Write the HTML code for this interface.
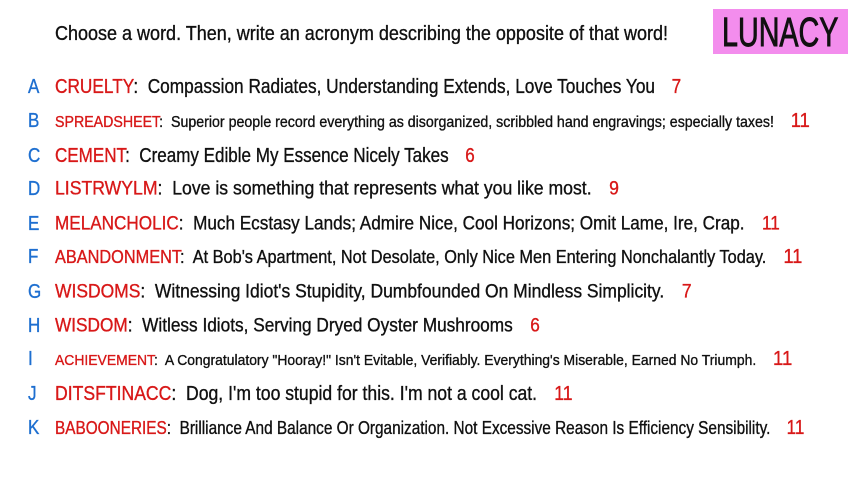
<!DOCTYPE html>
<html><head><meta charset="utf-8"><style>
html,body{margin:0;padding:0;background:#fff;width:853px;height:480px;overflow:hidden;font-family:"Liberation Sans",sans-serif;color:#111}
.l{position:absolute;left:0;white-space:nowrap;line-height:1;transform-origin:0 50%;-webkit-text-stroke:0.35px currentColor}
.k{position:absolute;left:28px;color:#1e6fd0;font-size:20px;transform:translateY(-50%) scaleX(0.85);transform-origin:0 50%;line-height:1;-webkit-text-stroke:0.35px currentColor}
.w{color:#d81818}
.n{color:#d81818;margin-left:14px}
.hd{position:absolute;left:55px;top:34px;font-size:20px;transform:translateY(-50%) scaleX(0.9);transform-origin:0 50%;white-space:nowrap;line-height:1;-webkit-text-stroke:0.35px currentColor}
.box{position:absolute;left:713px;top:9px;width:135px;height:45px;background:#f38ded}
.box span{position:absolute;left:9px;top:3px;font-size:41px;line-height:41px;color:#111;transform:scaleX(0.7);transform-origin:0 0;-webkit-text-stroke:0.9px #111}
</style></head><body>
<div class="hd">Choose a word. Then, write an acronym describing the opposite of that word!</div>
<div class="box"><span>LUNACY</span></div>

<div class="k" style="top:87px">A</div><div class="l" style="top:87px;left:55px;font-size:20.5px;transform:translateY(-50%) scaleX(0.842)"><span class="w">CRUELTY</span>:&nbsp; Compassion Radiates, Understanding Extends, Love Touches You <span class="n">7</span></div>
<div class="k" style="top:121px">B</div><div class="l" style="top:121px;left:55px;font-size:15.5px;transform:translateY(-50%) scaleX(0.916)"><span class="w">SPREADSHEET</span>:&nbsp; Superior people record everything as disorganized, scribbled hand engravings; especially taxes! <span class="n" style="font-size:20px">11</span></div>
<div class="k" style="top:156px">C</div><div class="l" style="top:156px;left:55px;font-size:20px;transform:translateY(-50%) scaleX(0.852)"><span class="w">CEMENT</span>:&nbsp; Creamy Edible My Essence Nicely Takes <span class="n">6</span></div>
<div class="k" style="top:189px">D</div><div class="l" style="top:189px;left:55px;font-size:19.5px;transform:translateY(-50%) scaleX(0.904)"><span class="w">LISTRWYLM</span>:&nbsp; Love is something that represents what you like most. <span class="n">9</span></div>
<div class="k" style="top:224px">E</div><div class="l" style="top:224px;left:55px;font-size:19px;transform:translateY(-50%) scaleX(0.902)"><span class="w">MELANCHOLIC</span>:&nbsp; Much Ecstasy Lands; Admire Nice, Cool Horizons; Omit Lame, Ire, Crap. <span class="n">11</span></div>
<div class="k" style="top:257px">F</div><div class="l" style="top:257px;left:55px;font-size:18px;transform:translateY(-50%) scaleX(0.906)"><span class="w">ABANDONMENT</span>:&nbsp; At Bob's Apartment, Not Desolate, Only Nice Men Entering Nonchalantly Today. <span class="n" style="font-size:20px">11</span></div>
<div class="k" style="top:292px">G</div><div class="l" style="top:292px;left:55px;font-size:19px;transform:translateY(-50%) scaleX(0.919)"><span class="w">WISDOMS</span>:&nbsp; Witnessing Idiot's Stupidity, Dumbfounded On Mindless Simplicity. <span class="n">7</span></div>
<div class="k" style="top:326px">H</div><div class="l" style="top:326px;left:55px;font-size:19px;transform:translateY(-50%) scaleX(0.907)"><span class="w">WISDOM</span>:&nbsp; Witless Idiots, Serving Dryed Oyster Mushrooms <span class="n">6</span></div>
<div class="k" style="top:359px">I</div><div class="l" style="top:359px;left:55px;font-size:15px;transform:translateY(-50%) scaleX(0.928)"><span class="w">ACHIEVEMENT</span>:&nbsp; A Congratulatory "Hooray!" Isn't Evitable, Verifiably. Everything's Miserable, Earned No Triumph. <span class="n" style="font-size:20px">11</span></div>
<div class="k" style="top:394px">J</div><div class="l" style="top:394px;left:55px;font-size:20px;transform:translateY(-50%) scaleX(0.88)"><span class="w">DITSFTINACC</span>:&nbsp; Dog, I'm too stupid for this. I'm not a cool cat. <span class="n">11</span></div>
<div class="k" style="top:428px">K</div><div class="l" style="top:428px;left:55px;font-size:18px;transform:translateY(-50%) scaleX(0.853)"><span class="w">BABOONERIES</span>:&nbsp; Brilliance And Balance Or Organization. Not Excessive Reason Is Efficiency Sensibility. <span class="n" style="font-size:20px">11</span></div>
</body></html>
